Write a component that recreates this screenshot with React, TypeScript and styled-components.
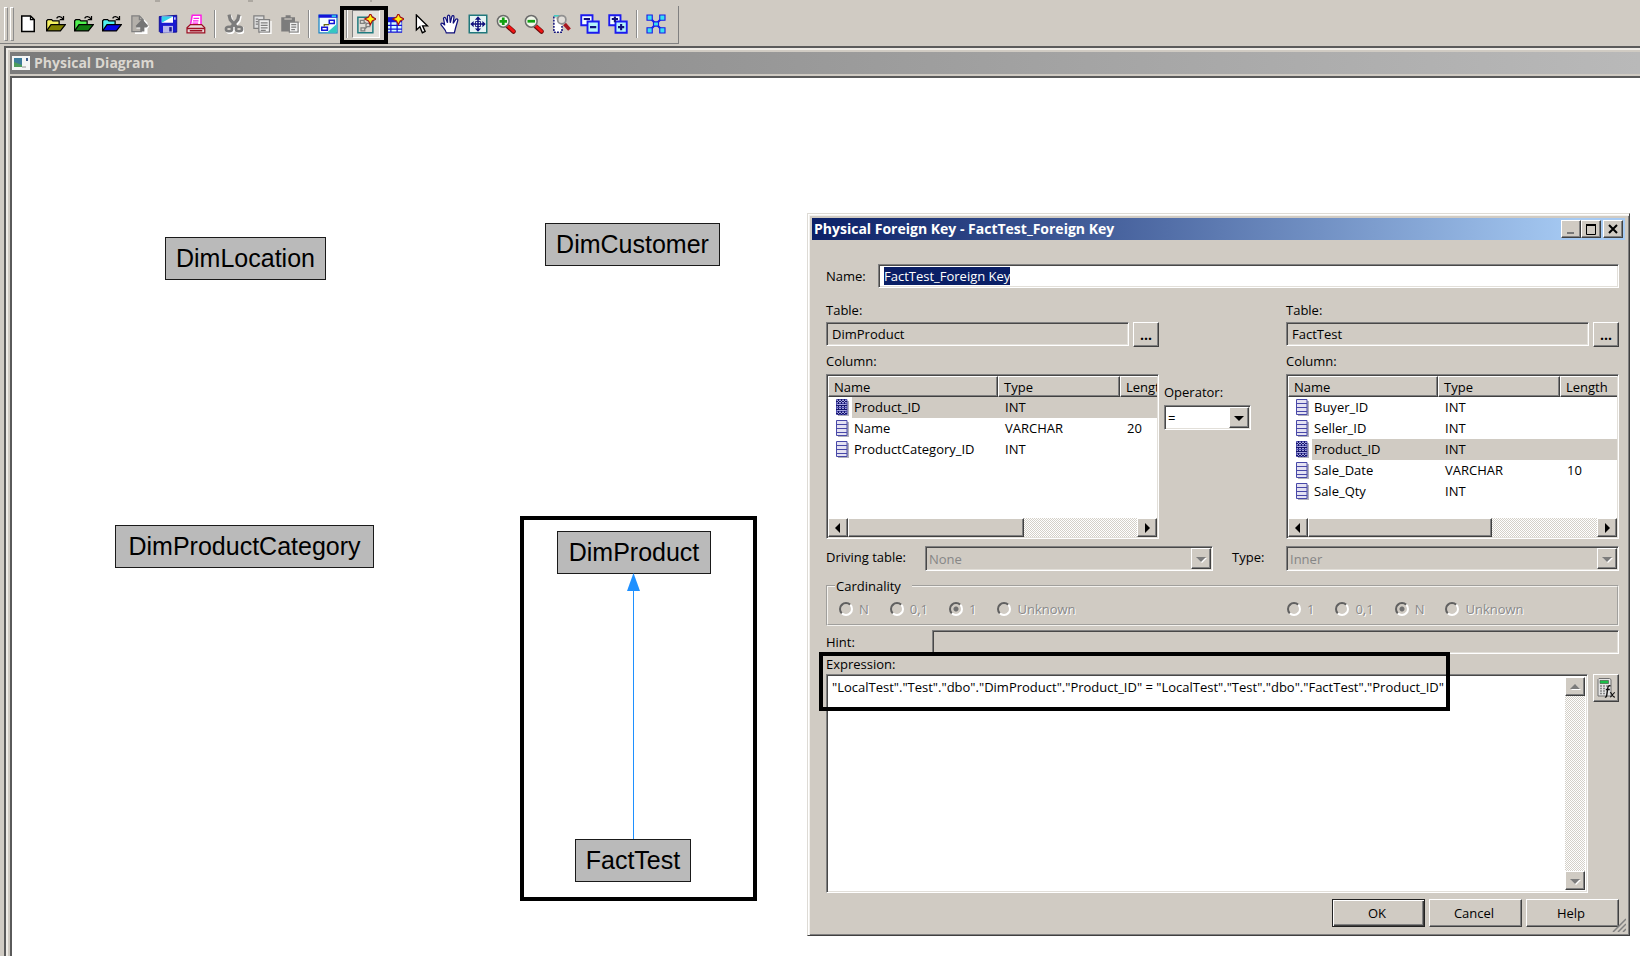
import React, { useEffect, useRef } from 'react';
import styled, { createGlobalStyle, css } from 'styled-components';

const face = '#d0cbc3';
const uiFont = '"Open Sans", "Noto Sans", sans-serif';

const GlobalStyle = createGlobalStyle`
  *, *::before, *::after { box-sizing: border-box; }
  html, body { margin: 0; padding: 0; background: ${face}; }
  body { overflow: hidden; color: #000; font: 13px/20px ${uiFont}; }
  button, input, select, textarea { font: inherit; color: inherit; margin: 0; border-radius: 0; outline: none; }
`;

const raised = css`
  border: 1px solid;
  border-color: #fff #404040 #404040 #fff;
  box-shadow: inset -1px -1px #808080;
  background: ${face};
`;

const sunken = css`
  border: 1px solid;
  border-color: #808080 #fff #fff #808080;
  box-shadow: inset 1px 1px #484848, inset -1px -1px #e2dfd9;
`;

const Page = styled.div`
  display: flex;
  flex-direction: column;
  height: 100vh;
  background: ${face};
`;

/* ---------- toolbar ---------- */

const MenuEdge = styled.div`
  height: 6px;
  svg { display: block; }
`;

const Toolbar = styled.div`
  display: flex;
  align-items: center;
  align-self: flex-start;
  height: 38px;
  padding: 0 8px 2px 4px;
  border-right: 1px solid #808080;
  border-bottom: 1px solid #808080;
`;

const Grip = styled.span`
  width: 10px;
  height: 34px;
  display: flex;
  gap: 2px;
  &::before, &::after {
    content: '';
    width: 4px;
    border: 1px solid;
    border-color: #fff #8c8c8c #8c8c8c #fff;
  }
`;

const Separator = styled.span`
  width: 10px;
  height: 28px;
  display: flex;
  justify-content: center;
  &::before {
    content: '';
    width: 2px;
    border-left: 1px solid #8c8c8c;
    border-right: 1px solid #fff;
  }
`;

const ToolButton = styled.button<{ $pressed?: boolean }>`
  width: 28px;
  height: 28px;
  padding: 0;
  border: 1px solid transparent;
  background: none;
  display: flex;
  align-items: center;
  justify-content: center;
  ${p => p.$pressed && css`
    background: #e4e1dc;
    border-color: #808080 #fff #fff #808080;
  `}
`;

const Marked = styled.span`
  position: relative;
`;

const Highlight = styled.span<{ $x: number; $y: number; $w: number; $h: number }>`
  position: absolute;
  left: ${p => p.$x}px;
  top: ${p => p.$y}px;
  width: ${p => p.$w}px;
  height: ${p => p.$h}px;
  border: 4px solid #000;
  pointer-events: none;
  z-index: 2;
`;

/* ---------- diagram window ---------- */

const DiagramWindow = styled.main`
  flex: 1;
  min-height: 0;
  display: flex;
  flex-direction: column;
  margin: 2px 0 0 4px;
  padding: 4px 0 0 4px;
  border-top: 2px solid #5a5a5a;
  border-left: 2px solid #5a5a5a;
  box-shadow: inset 2px 2px #efece7;
`;

const DiagramTitle = styled.header`
  display: flex;
  align-items: center;
  gap: 4px;
  height: 22px;
  padding-left: 2px;
  background: linear-gradient(90deg, #7b7b7b, #b9b9b9);
  color: #dbd7d0;
  font-size: 14px;
  font-weight: 700;
`;

const Canvas = styled.section`
  position: relative;
  flex: 1;
  min-height: 0;
  margin-top: 2px;
  border-top: 2px solid #5a5a5a;
  border-left: 2px solid #5a5a5a;
  background: #fff;
`;

const Node = styled.div<{ $x: number; $y: number; $w: number }>`
  position: absolute;
  left: ${p => p.$x}px;
  top: ${p => p.$y}px;
  width: ${p => p.$w}px;
  height: 43px;
  border: 1px solid #1a1a1a;
  background: #bababa;
  color: #000;
  font: 25px/41px "Liberation Sans", Arial, sans-serif;
  text-align: center;
  white-space: nowrap;
`;

const Link = styled.svg`
  position: absolute;
  left: 614px;
  top: 495px;
`;

/* ---------- dialog ---------- */

const Dialog = styled.form`
  position: absolute;
  top: 135px;
  left: 795px;
  right: 10px;
  padding: 4px 4px 8px;
  border: 1px solid;
  border-color: #dedbd5 #404040 #404040 #dedbd5;
  box-shadow: inset 1px 1px #fff, inset 2px 2px #f2f0ec, inset -1px -1px #808080;
  background: ${face};
`;

const DialogTitle = styled.header`
  display: flex;
  align-items: center;
  height: 22px;
  padding: 0 2px;
  background: linear-gradient(90deg, #0a1f66, #a6caf3 94%);
  color: #fff;
  font-size: 14px;
  font-weight: 700;
  line-height: 22px;
  h1 { flex: 1; margin: 0; font: inherit; }
`;

const CaptionButton = styled.button<{ $apart?: boolean }>`
  ${raised}
  width: 20px;
  height: 18px;
  padding: 0;
  margin-left: ${p => (p.$apart ? 2 : 0)}px;
  display: flex;
  align-items: center;
  justify-content: center;
`;

const Body = styled.div`
  display: flex;
  flex-direction: column;
  padding: 24px 6px 0 14px;
`;

const NameRow = styled.div`
  display: grid;
  grid-template-columns: 52px 1fr;
  align-items: center;
  height: 24px;
  margin-bottom: 12px;
`;

const TextField = styled.input`
  ${sunken}
  width: 100%;
  min-width: 0;
  height: 24px;
  padding: 0 5px;
  background-color: #fff;
  line-height: 17px;
  &:read-only { background-color: ${face}; }
  &::selection { background: #0a1f66; color: #fff; }
`;

const Join = styled.div`
  display: grid;
  grid-template-columns: 333px 1fr 333px;
`;

const Side = styled.section`
  display: flex;
  flex-direction: column;
  min-width: 0;
`;

const TableField = styled.div`
  display: flex;
  gap: 4px;
  margin: 2px 0 4px;
`;

const BrowseButton = styled.button`
  ${raised}
  flex: none;
  width: 26px;
  height: 25px;
  padding: 0;
  font-size: 14px;
  font-weight: 700;
  line-height: 20px;
`;

const ListBox = styled.div`
  ${sunken}
  display: flex;
  flex-direction: column;
  height: 165px;
  margin-top: 3px;
  padding: 1px;
  background: #fff;
`;

const Viewport = styled.div`
  flex: 1;
  overflow: hidden;
`;

const Grid = styled.table`
  width: 372px;
  table-layout: fixed;
  border-collapse: separate;
  border-spacing: 0;
  th {
    ${raised}
    height: 21px;
    padding: 0 5px;
    font-weight: 400;
    line-height: 18px;
    text-align: left;
  }
  td { height: 21px; padding: 0 7px; line-height: 21px; vertical-align: top; }
  td:first-child { padding: 0; }
`;

const Row = styled.tr<{ $selected?: boolean }>`
  td + td { background: ${p => (p.$selected ? face : 'transparent')}; }
  td span { background: ${p => (p.$selected ? face : 'transparent')}; }
`;

const NameCell = styled.div`
  display: flex;
  align-items: center;
  gap: 3px;
  height: 21px;
  padding-left: 8px;
  span { flex: 1; padding-left: 2px; line-height: 21px; }
`;

const track = css`
  background: repeating-conic-gradient(#fff 0 25%, #d4d0c8 0 50%) 0 0 / 2px 2px;
`;

const ScrollBar = styled.div<{ $vertical?: boolean }>`
  ${track}
  display: flex;
  flex: none;
  flex-direction: ${p => (p.$vertical ? 'column' : 'row')};
  justify-content: space-between;
  ${p => (p.$vertical ? 'width: 20px;' : 'height: 19px;')}
`;

const ScrollButton = styled.button`
  ${raised}
  width: 20px;
  height: 19px;
  padding: 0;
  display: flex;
  align-items: center;
  justify-content: center;
`;

const Thumb = styled.span<{ $w: number }>`
  ${raised}
  width: ${p => p.$w}px;
  margin-right: auto;
`;

const Operator = styled.div`
  display: flex;
  flex-direction: column;
  gap: 3px;
  padding: 82px 0 0 5px;
`;

const SelectBox = styled.span<{ $w?: number }>`
  ${sunken}
  display: flex;
  width: ${p => (p.$w ? p.$w + 'px' : '100%')};
  height: 25px;
  padding: 1px;
  background: #fff;
  &:has(select:disabled) { background: ${face}; }
  select {
    flex: 1;
    min-width: 0;
    appearance: none;
    border: 0;
    padding: 0 2px;
    background: none;
    line-height: 20px;
  }
  select:disabled { color: #868686; opacity: 1; }
`;

const DropArrow = styled.span`
  ${raised}
  width: 20px;
  display: flex;
  align-items: center;
  justify-content: center;
`;

const JoinOptions = styled.div`
  display: grid;
  grid-template-columns: 99px 288px 1fr 333px;
  margin-top: 7px;
  label { line-height: 22px; }
  label:nth-of-type(2) { padding-left: 19px; }
`;

const Cardinality = styled.fieldset`
  display: grid;
  grid-template-columns: 1fr 330px;
  min-width: 0;
  height: 50px;
  margin: 5px 0 4px;
  padding: 3px 0 0 11px;
  border: 2px groove #f4f2ee;
  legend { margin-left: -4px; padding: 0 11px 0 1px; line-height: 20px; }
`;

const RadioSet = styled.div`
  display: flex;
  align-items: center;
  gap: 21px;
  height: 20px;
  label {
    display: flex;
    align-items: center;
    gap: 6px;
    color: #8a8a8a;
    text-shadow: 1px 1px #fff;
  }
  input {
    appearance: none;
    width: 14px;
    height: 14px;
    border: 2px solid;
    border-color: #606060 #fff #fff #606060;
    border-radius: 50%;
  }
  input:checked { background: radial-gradient(circle, #707070 0 2px, transparent 3px); }
`;

const HintRow = styled.div`
  display: grid;
  grid-template-columns: 106px 1fr;
  align-items: center;
  height: 24px;
`;

const Expression = styled.section`
  position: relative;
  display: grid;
  grid-template-columns: 1fr 26px;
  column-gap: 5px;
  label { grid-column: 1 / -1; }
`;

const ExpressionBox = styled.div`
  ${sunken}
  display: flex;
  height: 219px;
  padding: 2px;
  background: #fff;
  textarea {
    flex: 1;
    min-width: 0;
    padding: 0 3px;
    border: 0;
    background: none;
    resize: none;
    overflow: hidden;
    white-space: nowrap;
  }
`;

const CalcButton = styled.button`
  ${raised}
  height: 28px;
  padding: 0;
  display: flex;
  align-items: center;
  justify-content: center;
`;

const Actions = styled.footer`
  display: flex;
  justify-content: flex-end;
  gap: 4px;
  margin-top: 6px;
`;

const ActionButton = styled.button<{ $default?: boolean }>`
  ${raised}
  width: 93px;
  height: 28px;
  padding: 0 3px 1px 0;
  ${p => p.$default && css`
    border-color: #222;
    box-shadow: inset 1px 1px #fff, inset -1px -1px #404040, inset -2px -2px #808080;
  `}
`;

const ResizeGrip = styled.svg`
  position: absolute;
  right: 3px;
  bottom: 3px;
`;

/* ---------- icons ---------- */

const Icon = ({ children }: { children: React.ReactNode }) => (
  <svg width="20" height="20" viewBox="0 0 16 16" aria-hidden="true">{children}</svg>
);

const NewIcon = () => (
  <Icon><path d="M3 1.500h7l3 3v9.500H3z" fill="#fff" stroke="#000" strokeWidth="1.200" /><path d="M10 1.500v3h3" fill="none" stroke="#000" /></Icon>
);

const FolderIcon = ({ light, dark }: { light: string; dark: string }) => (
  <Icon>
    <path d="M.5 13.500V5.500l1-1h3l1 1h5v3" fill={light} stroke="#000" />
    <path d="M.5 13.500l3.500-5h11.500l-4 5z" fill={dark} stroke="#000" />
    <path d="M8.500 3.500c1-2 3.500-2 5 .5M14 1.500v3h-3" fill="none" stroke="#000" />
  </Icon>
);

const CheckInIcon = () => (
  <Icon>
    <path d="M2 2h7l4 4v9H3z" fill="#fff" transform="translate(1 1)" />
    <path d="M1.500 1.500h6l3 3v9.500h-9z" fill="#b4b0aa" stroke="#808080" />
    <path d="M7.500 1.500v3h3" fill="none" stroke="#808080" />
    <path d="M10.500 5.500l5 4.500-1.500 1.500h-1.500V15h-3v-3.500H5L7 9z" fill="#fff" />
    <path d="M9.800 4l4.800 5.500-1.500 1.200h-1.600V14H8.200v-3.300H5.500L4.500 9.500z" fill="#757575" />
  </Icon>
);

const SaveIcon = () => (
  <Icon>
    <path d="M1 2l14-1v13.500L2 15l-1-1z" fill="#1a1ad0" stroke="#000080" strokeWidth=".6" />
    <path d="M3 2h9v5H3z" fill="#fff" /><path d="M3 2h9L3 7z" fill="#36d0e8" />
    <path d="M4 9.500h8V15H4z" fill="#b9b9e8" /><path d="M9 10.500h2V14H9z" fill="#1a1a90" /><path d="M13 2.500h1v2h-1z" fill="#fff" />
  </Icon>
);

const PrintIcon = () => (
  <Icon>
    <path d="M5 1h7v8H3.500z" fill="#fff" stroke="#ff1ce8" strokeWidth="1.200" />
    <path d="M6 3.500h4.500M5.600 5.500H10M5.200 7.200h4.500" stroke="#ff1ce8" />
    <path d="M.8 11l2.700-2.500h9L15 11v4H.8z" fill="#e8dada" stroke="#9c1024" />
    <path d="M.8 11.500H15M3 13.300h10" stroke="#9c1024" strokeWidth="1.200" />
  </Icon>
);

const CutIcon = () => (
  <Icon>
    <g fill="none" stroke="#fff" strokeWidth="2.600" transform="translate(1 1)"><path d="M4 .5l1 4 6 7M12 .5l-1 4-6 7" /><ellipse cx="4" cy="12" rx="2.500" ry="1.800" /><ellipse cx="12" cy="12" rx="2.500" ry="1.800" /></g>
    <g fill="none" stroke="#7c7c7c" strokeWidth="2.600"><path d="M4 .5l1 4 6 7M12 .5l-1 4-6 7" /></g>
    <g fill="#d8d4cd" stroke="#7c7c7c" strokeWidth="2"><ellipse cx="4" cy="12" rx="2.500" ry="1.800" /><ellipse cx="12" cy="12" rx="2.500" ry="1.800" /></g>
  </Icon>
);

const CopyIcon = () => (
  <Icon>
    <path d="M1.500 1.500h8v10h-8z" fill="#ddd" stroke="#808080" />
    <path d="M3 4h2M3 6h2M3 8h2" stroke="#808080" />
    <path d="M5.500 4.500h8.500v10H5.500z" fill="#eee" stroke="#808080" />
    <path d="M7 7h5.500M7 9h5.500M7 11h5.500M7 13h4" stroke="#808080" />
    <path d="M15.200 5.500v10H6.500" fill="none" stroke="#fff" />
  </Icon>
);

const PasteIcon = () => (
  <Icon>
    <path d="M1 2.500h3.500V1h4v1.500H12V14H1z" fill="#7c7c7c" />
    <path d="M3.500 4h6" stroke="#cfcbc4" />
    <path d="M7.500 6.500h7v8h-7z" fill="#eee" stroke="#808080" />
    <path d="M9 8.500h4M9 10.500h4M9 12.500h3" stroke="#808080" />
    <path d="M15.600 7v8.500H8" fill="none" stroke="#fff" />
  </Icon>
);

const DiagramIcon = () => (
  <Icon>
    <path d="M.8.800h14.400v14.200H.8z" fill="#f4ffff" stroke="#1c84c4" />
    <path d="M15 8v7H7z" fill="#34c8c0" />
    <path d="M.5.500h15v2.500H.5z" fill="#1414d8" /><path d="M11 1h3.500v1.500H11z" fill="#2cc8e8" />
    <path d="M9 5h4v2.500H9zM3 10.500h4.500V13H3z" fill="#fff" stroke="#1414d8" strokeWidth="1.200" />
    <path d="M5 10V8.500h4" fill="none" stroke="#6a6a10" />
  </Icon>
);

const Star = () => (
  <path d="M11.500-.5l1.500 3L16 4l-3 1.500-1.500 3-1.500-3L7 4l3-1.500z" fill="#ffee10" stroke="#a81010" strokeWidth=".9" />
);

const NewJoinIcon = () => (
  <Icon>
    <path d="M1.500 2.500h12v12.500h-12z" fill="#dedbd5" stroke="#217c80" strokeWidth="1.200" />
    <path d="M3.500 5h3v2.500h-3zM8 7.500h3V10H8zM4 11h3v2.500H4zM6.500 6.500L9 8M9 10l-2 2" fill="none" stroke="#808080" />
    <Star />
  </Icon>
);

const NewTableIcon = () => (
  <Icon>
    <path d="M1 2.500h13.500V15H1z" fill="#1414d8" />
    <path d="M2 6.500h3v2H2zM6 6.500h4v2H6zM11 6.500h3v2h-3zM2 9.500h3v2H2zM6 9.500h4v2H6zM11 9.500h3v2h-3zM2 12.500h3V14H2zM6 12.500h4V14H6zM11 12.500h3V14h-3z" fill="#d4fcff" />
    <Star />
  </Icon>
);

const PointerIcon = () => (
  <Icon><path d="M3.500.800v12l2.800-2.600 2 4.800 2.200-1-2-4.500h3.800z" fill="#fff" stroke="#000" strokeWidth="1.100" /></Icon>
);

const HandIcon = () => (
  <Icon><path d="M5 15c-.5-2.500-2.500-4-4.200-6.500C.5 7 2 6.500 3.800 9L2.800 3.500c.2-1.200 1.500-1.200 1.800 0L6 7 6 1.800C6.300.600 7.600.600 7.800 1.800L8.200 7l1.300-5c.4-1 1.700-.8 1.700.4L10.500 7.500l2.200-3.300c.8-.7 1.900-.1 1.500 1L12.500 11 11.500 15z" fill="#fff" stroke="#10107c" /></Icon>
);

const FitIcon = () => (
  <Icon>
    <path d="M1 1h14v14H1z" fill="#e6f4f4" stroke="#20787c" strokeWidth="1.200" />
    <path d="M8 3v10M3 8h10" stroke="#10107c" strokeWidth="1.200" />
    <path d="M8 1.800l2.500 2.700h-5zM8 14.200l2.500-2.700h-5zM1.800 8l2.700-2.500v5zM14.200 8l-2.700-2.500v5z" fill="#10107c" />
    <path d="M6 6h4v4H6z" fill="none" stroke="#10107c" strokeWidth=".7" />
  </Icon>
);

const ZoomIcon = ({ plus }: { plus?: boolean }) => (
  <Icon>
    <path d="M9.500 10l4.500 4" stroke="#6a0808" strokeWidth="3.600" strokeLinecap="round" />
    <path d="M10 10l4 3.800" stroke="#f01414" strokeWidth="2.400" strokeLinecap="round" />
    <circle cx="5.800" cy="5.800" r="4.700" fill="#f1f6ea" stroke="#6c6c6c" strokeWidth="1.200" />
    <path d={plus ? 'M2.800 5.800h6M5.800 2.800v6' : 'M2.800 5.800h6'} stroke="#12a012" strokeWidth="2.200" />
  </Icon>
);

const ZoomAreaIcon = () => (
  <Icon>
    <path d="M1.500 2v12.500H8V9" fill="#fff" stroke="#10107c" strokeWidth="1.200" strokeDasharray="1.500 1" />
    <path d="M1.500 1.500H6" stroke="#34c8c0" strokeWidth="1.200" />
    <path d="M10 8l4 4.500" stroke="#a81820" strokeWidth="3" />
    <circle cx="7.800" cy="4.500" r="3.300" fill="#e2dfda" stroke="#909090" strokeWidth="1.400" />
  </Icon>
);

const StackIcon = ({ plus }: { plus?: boolean }) => (
  <Icon>
    <path d="M1 1h9v8H1z" fill="#f4ffff" stroke="#1a1af0" strokeWidth="1.500" />
    <path d="M6 6h9v9H6z" fill="#b4f4fa" stroke="#1a1af0" strokeWidth="1.500" />
    <path d={plus ? 'M3 4h5M5.500 2v4.500M8 10.500h5M10.500 8v5' : 'M3 4h5M8 10.500h5'} stroke="#10107c" strokeWidth="1.700" />
  </Icon>
);

const NetworkIcon = () => (
  <Icon>
    <path d="M3 3l10 10M13 3L3 13" stroke="#1a1af0" strokeWidth="1.600" />
    <g fill="#38e0f0" stroke="#1a1ae8" strokeWidth=".9"><path d="M.8.800H5V5H.8zM11 .8h4.200V5H11zM.8 11H5v4.200H.8zM11 11h4.200v4.200H11zM6 6.300h4v3.400H6z" /></g>
  </Icon>
);

const WindowIcon = () => (
  <svg width="18" height="14" viewBox="0 0 18 14" aria-hidden="true">
    <path d="M0 0h18v14H0z" fill="#f4f6f6" />
    <path d="M2 2h8v9H2z" fill="#3c7c9c" /><path d="M2 6l8 3v2H2z" fill="#4c9c5c" />
    <path d="M14 2h2v3h-2z" fill="#3c5c8c" /><path d="M10 10h4v2h-4z" fill="#c4c4c4" />
  </svg>
);

const ColumnIcon = ({ selected }: { selected?: boolean }) => (
  <svg width="13" height="17" viewBox="0 0 13 17" aria-hidden="true">
    <path d="M2 2h11v15H2z" fill="#b0b0bc" />
    <path d="M.5.500h10.500v15H.5z" fill={selected ? '#a4a4dc' : '#e4e2f2'} stroke="#4848a8" />
    <path d="M1 4.500h10M1 8.500h10M1 12.500h10" stroke="#4848a8" />
    {selected && <path d="M2.500 0v16M5.500 0v16M8.500 0v16M0 2.500h12M0 6.500h12M0 10.500h12M0 14.500h12" stroke="#14146c" strokeDasharray="2 1" />}
  </svg>
);

const CalcIcon = () => (
  <svg width="20" height="22" viewBox="0 0 20 22" aria-hidden="true">
    <path d="M2 2.500l1-1h10.500l1.500 1V19H2z" fill="#e4e4e4" stroke="#707070" />
    <path d="M4 3.500h8.500v3H4z" fill="#18c048" stroke="#486048" strokeWidth=".7" />
    <path d="M4 9h2M7 9h2M10 9h2M4 11.500h2M7 11.500h2M4 14h2M7 14h2M4 16.500h2M7 16.500h2" stroke="#888" strokeWidth="1.500" />
    <path d="M14.500 9c-2-1-2.500.5-2.800 2.500L10.600 19c-.3 1-.8 1.300-1.600 1M9.800 12.500h4" fill="none" stroke="#111" strokeWidth="1.400" />
    <path d="M14 15.500c2-.5 2 5 5 4.500M19 15.500c-2 0-3 4.500-5 4.500" fill="none" stroke="#111" strokeWidth="1.200" />
  </svg>
);

const paths = {
  up: 'M5 2l5 5H0z',
  down: 'M0 3h10L5 8z',
  left: 'M7 0v10L2 5z',
  right: 'M3 0v10l5-5z',
};

const Arrow = ({ dir, muted }: { dir: keyof typeof paths; muted?: boolean }) => (
  <svg width="12" height="12" viewBox="-1 -1 12 12" aria-hidden="true">
    {muted && <path d={paths[dir]} fill="#fff" transform="translate(1 1)" />}
    <path d={paths[dir]} fill={muted ? '#7c7c7c' : '#000'} />
  </svg>
);

/* ---------- parts ---------- */

type Column = { name: string; type: string; length?: string };

type ColumnListProps = { title: string; columns: Column[]; selected: string; nameWidth: number; thumb: number };

const ColumnList = ({ title, columns, selected, nameWidth, thumb }: ColumnListProps) => (
  <ListBox>
    <Viewport>
      <Grid aria-label={title}>
        <colgroup><col width={nameWidth} /><col width={122} /><col /></colgroup>
        <thead><tr><th>Name</th><th>Type</th><th>Length</th></tr></thead>
        <tbody>
          {columns.map(c => (
            <Row key={c.name} $selected={c.name === selected}>
              <td><NameCell><ColumnIcon selected={c.name === selected} /><span>{c.name}</span></NameCell></td>
              <td>{c.type}</td>
              <td>{c.length}</td>
            </Row>
          ))}
        </tbody>
      </Grid>
    </Viewport>
    <ScrollBar>
      <ScrollButton type="button" aria-label="Scroll left"><Arrow dir="left" /></ScrollButton>
      <Thumb $w={thumb} />
      <ScrollButton type="button" aria-label="Scroll right"><Arrow dir="right" /></ScrollButton>
    </ScrollBar>
  </ListBox>
);

const JoinSide = ({ id, table, ...list }: { id: string; table: string } & Omit<ColumnListProps, 'title'>) => (
  <Side>
    <label htmlFor={id}>Table:</label>
    <TableField>
      <TextField id={id} value={table} readOnly />
      <BrowseButton type="button" aria-label={`Browse for ${table}`}>...</BrowseButton>
    </TableField>
    <span>Column:</span>
    <ColumnList title={`${table} columns`} {...list} />
  </Side>
);

const Choice = ({ id, value, disabled, width }: { id: string; value: string; disabled?: boolean; width?: number }) => (
  <SelectBox $w={width}>
    <select id={id} disabled={disabled} defaultValue={value}><option>{value}</option></select>
    <DropArrow><Arrow dir="down" muted={disabled} /></DropArrow>
  </SelectBox>
);

const Radios = ({ name, options, checked }: { name: string; options: string[]; checked: string }) => (
  <RadioSet>
    {options.map(o => (
      <label key={o}><input type="radio" name={name} defaultChecked={o === checked} disabled />{o}</label>
    ))}
  </RadioSet>
);

const productColumns: Column[] = [
  { name: 'Product_ID', type: 'INT' },
  { name: 'Name', type: 'VARCHAR', length: '20' },
  { name: 'ProductCategory_ID', type: 'INT' },
];

const factColumns: Column[] = [
  { name: 'Buyer_ID', type: 'INT' },
  { name: 'Seller_ID', type: 'INT' },
  { name: 'Product_ID', type: 'INT' },
  { name: 'Sale_Date', type: 'VARCHAR', length: '10' },
  { name: 'Sale_Qty', type: 'INT' },
];

const ForeignKeyDialog = () => {
  const nameRef = useRef<HTMLInputElement>(null);
  useEffect(() => {
    nameRef.current?.focus();
    nameRef.current?.select();
  }, []);
  return (
    <Dialog onSubmit={e => e.preventDefault()}>
      <DialogTitle>
        <h1>Physical Foreign Key - FactTest_Foreign Key</h1>
        <CaptionButton type="button" aria-label="Minimize">
          <svg width="12" height="12"><path d="M2 10h7" stroke="#777" strokeWidth="2" /></svg>
        </CaptionButton>
        <CaptionButton type="button" aria-label="Maximize">
          <svg width="12" height="12"><path d="M1 1.500h10M1.500 1v10.500h9V1M1 2.500h10" fill="none" stroke="#000" /></svg>
        </CaptionButton>
        <CaptionButton type="button" aria-label="Close" $apart>
          <svg width="12" height="12"><path d="M2 2l8 8M10 2l-8 8" stroke="#000" strokeWidth="2" /></svg>
        </CaptionButton>
      </DialogTitle>
      <Body>
        <NameRow>
          <label htmlFor="key-name">Name:</label>
          <TextField id="key-name" ref={nameRef} defaultValue="FactTest_Foreign Key" />
        </NameRow>
        <Join>
          <JoinSide id="left-table" table="DimProduct" columns={productColumns} selected="Product_ID" nameWidth={170} thumb={176} />
          <Operator>
            <label htmlFor="operator">Operator:</label>
            <Choice id="operator" value="=" width={87} />
          </Operator>
          <JoinSide id="right-table" table="FactTest" columns={factColumns} selected="Product_ID" nameWidth={150} thumb={184} />
        </Join>
        <JoinOptions>
          <label htmlFor="driving">Driving table:</label>
          <Choice id="driving" value="None" disabled />
          <label htmlFor="join-type">Type:</label>
          <Choice id="join-type" value="Inner" disabled />
        </JoinOptions>
        <Cardinality>
          <legend>Cardinality</legend>
          <Radios name="left-cardinality" options={['N', '0,1', '1', 'Unknown']} checked="1" />
          <Radios name="right-cardinality" options={['1', '0,1', 'N', 'Unknown']} checked="N" />
        </Cardinality>
        <HintRow>
          <label htmlFor="hint">Hint:</label>
          <TextField id="hint" readOnly />
        </HintRow>
        <Expression>
          <label htmlFor="expression">Expression:</label>
          <ExpressionBox>
            <textarea
              id="expression"
              spellCheck={false}
              defaultValue={'"LocalTest"."Test"."dbo"."DimProduct"."Product_ID" = "LocalTest"."Test"."dbo"."FactTest"."Product_ID"'}
            />
            <ScrollBar $vertical>
              <ScrollButton type="button" aria-label="Scroll up"><Arrow dir="up" muted /></ScrollButton>
              <ScrollButton type="button" aria-label="Scroll down"><Arrow dir="down" muted /></ScrollButton>
            </ScrollBar>
          </ExpressionBox>
          <CalcButton type="button" aria-label="Expression builder"><CalcIcon /></CalcButton>
          <Highlight $x={-7} $y={-2} $w={631} $h={59} />
        </Expression>
        <Actions>
          <ActionButton type="submit" $default>OK</ActionButton>
          <ActionButton type="button">Cancel</ActionButton>
          <ActionButton type="button">Help</ActionButton>
        </Actions>
      </Body>
      <ResizeGrip width="14" height="14" aria-hidden="true">
        <path d="M1 14L14 1M6 14l8-8M11 14l3-3" stroke="#808080" strokeWidth="1.500" />
      </ResizeGrip>
    </Dialog>
  );
};

const fileTools = [
  ['New', <NewIcon />],
  ['Open', <FolderIcon light="#f4f060" dark="#808000" />],
  ['Open online', <FolderIcon light="#50f050" dark="#107c10" />],
  ['Open offline', <FolderIcon light="#50f0f0" dark="#0808e8" />],
  ['Check in', <CheckInIcon />],
  ['Save', <SaveIcon />],
  ['Print', <PrintIcon />],
] as const;

const editTools = [
  ['Cut', <CutIcon />],
  ['Copy', <CopyIcon />],
  ['Paste', <PasteIcon />],
] as const;

const viewTools = [
  ['New table', <NewTableIcon />],
  ['Select', <PointerIcon />],
  ['Pan', <HandIcon />],
  ['Fit', <FitIcon />],
  ['Zoom in', <ZoomIcon plus />],
  ['Zoom out', <ZoomIcon />],
  ['Marquee zoom', <ZoomAreaIcon />],
  ['Collapse', <StackIcon />],
  ['Expand', <StackIcon plus />],
] as const;

const Tools = ({ items }: { items: readonly (readonly [string, React.ReactElement])[] }) => (
  <>{items.map(([name, icon]) => <ToolButton key={name} type="button" aria-label={name}>{icon}</ToolButton>)}</>
);

export default function App() {
  return (
    <Page>
      <GlobalStyle />
      <MenuEdge>
        <svg width="400" height="3" aria-hidden="true"><path d="M155 1h5M248 1h5M371 0v2" stroke="#8a8680" /></svg>
      </MenuEdge>
      <Toolbar role="toolbar">
        <Grip />
        <Tools items={fileTools} />
        <Separator />
        <Tools items={editTools} />
        <Separator />
        <ToolButton type="button" aria-label="Physical diagram"><DiagramIcon /></ToolButton>
        <Separator />
        <Marked>
          <ToolButton type="button" aria-label="New join" $pressed><NewJoinIcon /></ToolButton>
          <Highlight $x={-12} $y={-4} $w={48} $h={38} />
        </Marked>
        <Tools items={viewTools} />
        <Separator />
        <ToolButton type="button" aria-label="Auto layout"><NetworkIcon /></ToolButton>
      </Toolbar>
      <DiagramWindow>
        <DiagramTitle><WindowIcon />Physical Diagram</DiagramTitle>
        <Canvas>
          <Node $x={153} $y={159} $w={161}>DimLocation</Node>
          <Node $x={533} $y={145} $w={175}>DimCustomer</Node>
          <Node $x={103} $y={447} $w={259}>DimProductCategory</Node>
          <Node $x={545} $y={453} $w={154}>DimProduct</Node>
          <Node $x={563} $y={761} $w={116}>FactTest</Node>
          <Link width="14" height="266" aria-hidden="true">
            <path d="M7.500 16v250" stroke="#1e90ff" />
            <path d="M7.500 0l6.500 18H1z" fill="#1e90ff" />
          </Link>
          <Highlight $x={508} $y={438} $w={237} $h={385} />
          <ForeignKeyDialog />
        </Canvas>
      </DiagramWindow>
    </Page>
  );
}
